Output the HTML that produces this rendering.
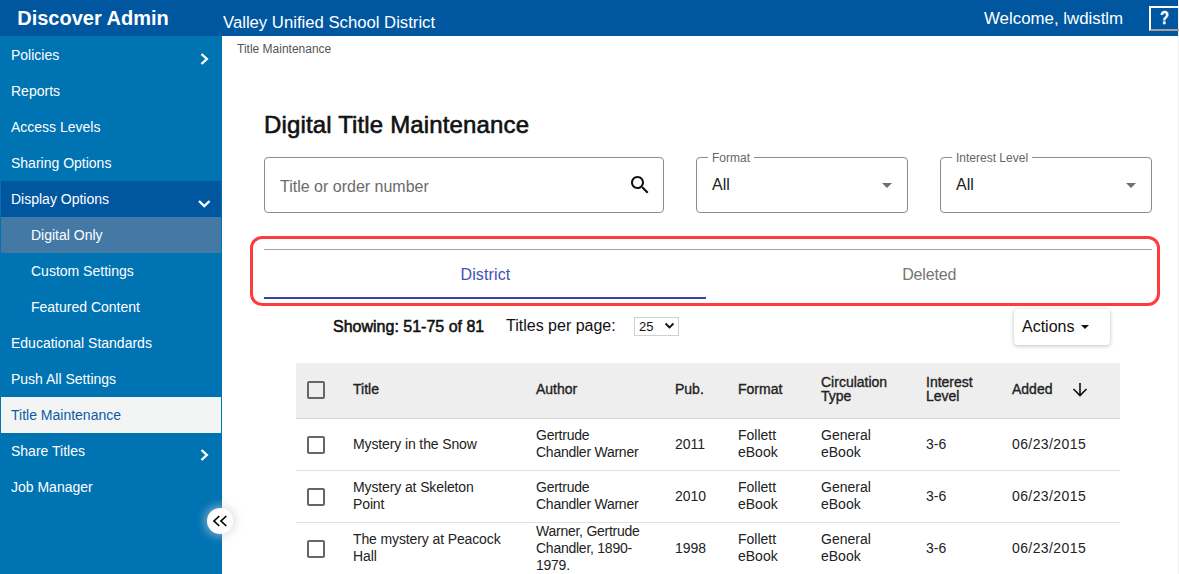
<!DOCTYPE html>
<html><head><meta charset="utf-8">
<style>
*{box-sizing:border-box;margin:0;padding:0}
html,body{width:1179px;height:574px;overflow:hidden;background:#fff}
body{position:relative;font-family:"Liberation Sans",sans-serif;color:#212121}
.a{position:absolute;white-space:nowrap;line-height:1}
#hdr{position:absolute;left:0;top:0;width:1178px;height:36px;background:#0057a0}
#rcol{position:absolute;left:1178px;top:0;width:1px;height:574px;background:#f2f2f2}
#side{position:absolute;left:0;top:36px;width:222px;height:538px;background:#0073b3}
.ni{position:absolute;left:1px;width:220px;height:36px;color:#fff;font-size:14px}
.ni span{position:absolute;left:10px;top:11px;line-height:1}
.ni.sub span{left:30px}
.wt{color:#fff}
.box{position:absolute;border:1px solid #8c8c8c;border-radius:4px}
.lbl{position:absolute;font-size:12px;color:#666;background:#fff;line-height:1}
.th{position:absolute;font-size:14px;font-weight:400;color:#222;line-height:14px;-webkit-text-stroke:0.35px #222}
.td{position:absolute;font-size:14px;color:#222;line-height:17px}
.hl{position:absolute;left:296px;width:824px;height:1px;background:#e0e0e0}
.cb{position:absolute;left:307px;width:18px;height:18px;border:2px solid #666;border-radius:2px}
</style></head><body>
<div id="hdr"></div>
<div id="rcol"></div>
<div class="a wt" style="left:17.2px;top:8px;font-size:20px;font-weight:700">Discover Admin</div>
<div class="a wt" style="left:223px;top:14.6px;font-size:16.7px">Valley Unified School District</div>
<div class="a wt" style="left:984px;top:11px;font-size:16.85px">Welcome, lwdistlm</div>
<div style="position:absolute;left:1149px;top:6px;width:30px;height:25px;border-style:solid;border-width:2px 0 2px 2px;border-color:#fff #a0a0a0 #a0a0a0 #fff"></div>
<div class="a wt" style="left:1159.8px;top:10px;font-size:17.5px;font-weight:700;-webkit-text-stroke:0.3px #fff;transform:scaleX(0.84);transform-origin:0 0">?</div>

<div id="side">
</div>
<div class="ni" style="top:37px"><span>Policies</span></div>
<div class="ni" style="top:73px"><span>Reports</span></div>
<div class="ni" style="top:109px"><span>Access Levels</span></div>
<div class="ni" style="top:145px"><span>Sharing Options</span></div>
<div class="ni" style="top:181px;background:#0057a0"><span>Display Options</span></div>
<div class="ni sub" style="top:217px;background:#4479a6"><span>Digital Only</span></div>
<div class="ni sub" style="top:253px"><span>Custom Settings</span></div>
<div class="ni sub" style="top:289px"><span>Featured Content</span></div>
<div class="ni" style="top:325px"><span>Educational Standards</span></div>
<div class="ni" style="top:361px"><span>Push All Settings</span></div>
<div class="ni" style="top:397px;background:#f3f5f5;color:#0b5aa6"><span>Title Maintenance</span></div>
<div class="ni" style="top:433px"><span>Share Titles</span></div>
<div class="ni" style="top:469px"><span>Job Manager</span></div>
<svg style="position:absolute;left:0;top:0" width="222" height="574">
<path d="M201.5 54 L206.8 59 L201.5 64" fill="none" stroke="#fff" stroke-width="2.4"/>
<path d="M199 201 L204.3 206 L209.6 201" fill="none" stroke="#fff" stroke-width="2.4"/>
<path d="M201.5 450 L206.8 455 L201.5 460" fill="none" stroke="#fff" stroke-width="2.4"/>
</svg>
<div style="position:absolute;left:206.5px;top:508px;width:26px;height:26px;border-radius:50%;background:#fff;box-shadow:0 0 9px 3px rgba(200,205,215,0.55)"></div>
<svg style="position:absolute;left:200px;top:500px" width="40" height="40">
<path d="M19.3 16 L14 21 L19.3 26 M26.3 16 L21 21 L26.3 26" fill="none" stroke="#000" stroke-width="1.7"/>
</svg>

<div class="a" style="left:237px;top:42.5px;font-size:12px;color:#555">Title Maintenance</div>
<div class="a" style="left:264px;top:113px;font-size:24px;font-weight:400;color:#111;-webkit-text-stroke:0.6px #111;letter-spacing:0.15px">Digital Title Maintenance</div>

<div class="box" style="left:264px;top:157px;width:400px;height:56px"></div>
<div class="a" style="left:280px;top:178.5px;font-size:16px;color:#6b6b6b">Title or order number</div>
<svg style="position:absolute;left:628px;top:173px" width="24" height="24" viewBox="0 0 24 24"><path fill="#111" d="M15.5 14h-.79l-.28-.27C15.410 12.59 16 11.11 16 9.5 16 5.91 13.09 3 9.5 3S3 5.91 3 9.5 5.91 16 9.5 16c1.61 0 3.09-.59 4.23-1.570l.27.28v.79l5 4.99L20.49 19l-4.990-5zm-6 0C7.01 14 5 11.99 5 9.5S7.01 5 9.5 5 14 7.01 14 9.5 11.99 14 9.5 14z"/></svg>

<div class="box" style="left:696px;top:157px;width:212px;height:56px"></div>
<div class="lbl" style="left:708px;top:152px;padding:0 4px 0 4px;height:12px">Format</div>
<div class="a" style="left:712px;top:177.4px;font-size:16px;color:#222">All</div>
<svg style="position:absolute;left:882px;top:183px" width="10" height="5"><path d="M0 0 L10 0 L5 5z" fill="#707070"/></svg>

<div class="box" style="left:940px;top:157px;width:212px;height:56px"></div>
<div class="lbl" style="left:952px;top:152px;padding:0 4px 0 4px;height:12px">Interest Level</div>
<div class="a" style="left:956px;top:177.4px;font-size:16px;color:#222">All</div>
<svg style="position:absolute;left:1126px;top:183px" width="10" height="5"><path d="M0 0 L10 0 L5 5z" fill="#707070"/></svg>

<div style="position:absolute;left:264px;top:249px;width:888px;height:1px;background:#a0a0a0"></div>
<div class="a" style="left:460.5px;top:266.5px;font-size:16px;color:#3f51b5;letter-spacing:0.12px">District</div>
<div class="a" style="left:902.2px;top:266.5px;font-size:16px;color:#757575;letter-spacing:-0.15px">Deleted</div>
<div style="position:absolute;left:264px;top:297px;width:442px;height:2px;background:#3344ad"></div>
<div style="position:absolute;left:250px;top:236px;width:910px;height:70px;border:3px solid #ff3c3c;border-radius:12px"></div>

<div class="a" style="left:333px;top:318.5px;font-size:16px;font-weight:400;color:#111;-webkit-text-stroke:0.55px #111">Showing: 51-75 of 81</div>
<div class="a" style="left:506px;top:317.8px;font-size:16px;color:#111">Titles per page:</div>
<div style="position:absolute;left:634px;top:317px;width:45px;height:19px;border:1px solid #d0d0d0;background:#fff"></div>
<div class="a" style="left:639px;top:320px;font-size:13px;color:#111">25</div>
<svg style="position:absolute;left:664px;top:322px" width="12" height="8"><path d="M1.5 1.5 L5.5 5.5 L9.5 1.5" fill="none" stroke="#111" stroke-width="1.8"/></svg>

<div style="position:absolute;left:1014px;top:309px;width:96px;height:36px;background:#fff;border-radius:4px;box-shadow:0 1px 4px rgba(0,0,0,0.25)"></div>
<div class="a" style="left:1022px;top:318.5px;font-size:16px;color:#111">Actions</div>
<svg style="position:absolute;left:1081px;top:325px" width="8" height="4"><path d="M0 0 L8 0 L4 4z" fill="#111"/></svg>

<div style="position:absolute;left:296px;top:363px;width:824px;height:55px;background:#eeeeee"></div>
<div class="hl" style="top:418px;background:#d6d6d6"></div>
<div class="cb" style="top:381px"></div>
<div class="th" style="left:353px;top:382.2px">Title</div>
<div class="th" style="left:536px;top:382.2px">Author</div>
<div class="th" style="left:675px;top:382.2px">Pub.</div>
<div class="th" style="left:738px;top:382.2px">Format</div>
<div class="th" style="left:821px;top:374.9px">Circulation<br>Type</div>
<div class="th" style="left:926px;top:374.9px">Interest<br>Level</div>
<div class="th" style="left:1012px;top:382.2px">Added</div>
<svg style="position:absolute;left:1070px;top:380px" width="20" height="20"><path d="M10 3 V15.5 M3.5 9 L10 15.5 L16.5 9" fill="none" stroke="#111" stroke-width="1.6"/></svg>

<div class="hl" style="top:470px"></div>
<div class="hl" style="top:522px"></div>

<div class="cb" style="top:435.5px"></div>
<div class="td" style="left:353px;top:435.6px;letter-spacing:-0.12px">Mystery in the Snow</div>
<div class="td" style="left:536px;top:426.5px;letter-spacing:-0.25px">Gertrude<br>Chandler Warner</div>
<div class="td" style="left:675px;top:435.6px">2011</div>
<div class="td" style="left:738px;top:426.5px">Follett<br>eBook</div>
<div class="td" style="left:821px;top:426.5px">General<br>eBook</div>
<div class="td" style="left:926px;top:435.6px">3-6</div>
<div class="td" style="left:1012px;top:435.6px;letter-spacing:0.4px">06/23/2015</div>

<div class="cb" style="top:487.5px"></div>
<div class="td" style="left:353px;top:478.5px;letter-spacing:-0.12px">Mystery at Skeleton<br>Point</div>
<div class="td" style="left:536px;top:478.5px;letter-spacing:-0.25px">Gertrude<br>Chandler Warner</div>
<div class="td" style="left:675px;top:487.6px">2010</div>
<div class="td" style="left:738px;top:478.5px">Follett<br>eBook</div>
<div class="td" style="left:821px;top:478.5px">General<br>eBook</div>
<div class="td" style="left:926px;top:487.6px">3-6</div>
<div class="td" style="left:1012px;top:487.6px;letter-spacing:0.4px">06/23/2015</div>

<div class="cb" style="top:539.5px"></div>
<div class="td" style="left:353px;top:530.5px;letter-spacing:-0.12px">The mystery at Peacock<br>Hall</div>
<div class="td" style="left:536px;top:522.5px;letter-spacing:-0.25px">Warner, Gertrude<br>Chandler, 1890-<br>1979.</div>
<div class="td" style="left:675px;top:539.6px">1998</div>
<div class="td" style="left:738px;top:530.5px">Follett<br>eBook</div>
<div class="td" style="left:821px;top:530.5px">General<br>eBook</div>
<div class="td" style="left:926px;top:539.6px">3-6</div>
<div class="td" style="left:1012px;top:539.6px;letter-spacing:0.4px">06/23/2015</div>
</body></html>
